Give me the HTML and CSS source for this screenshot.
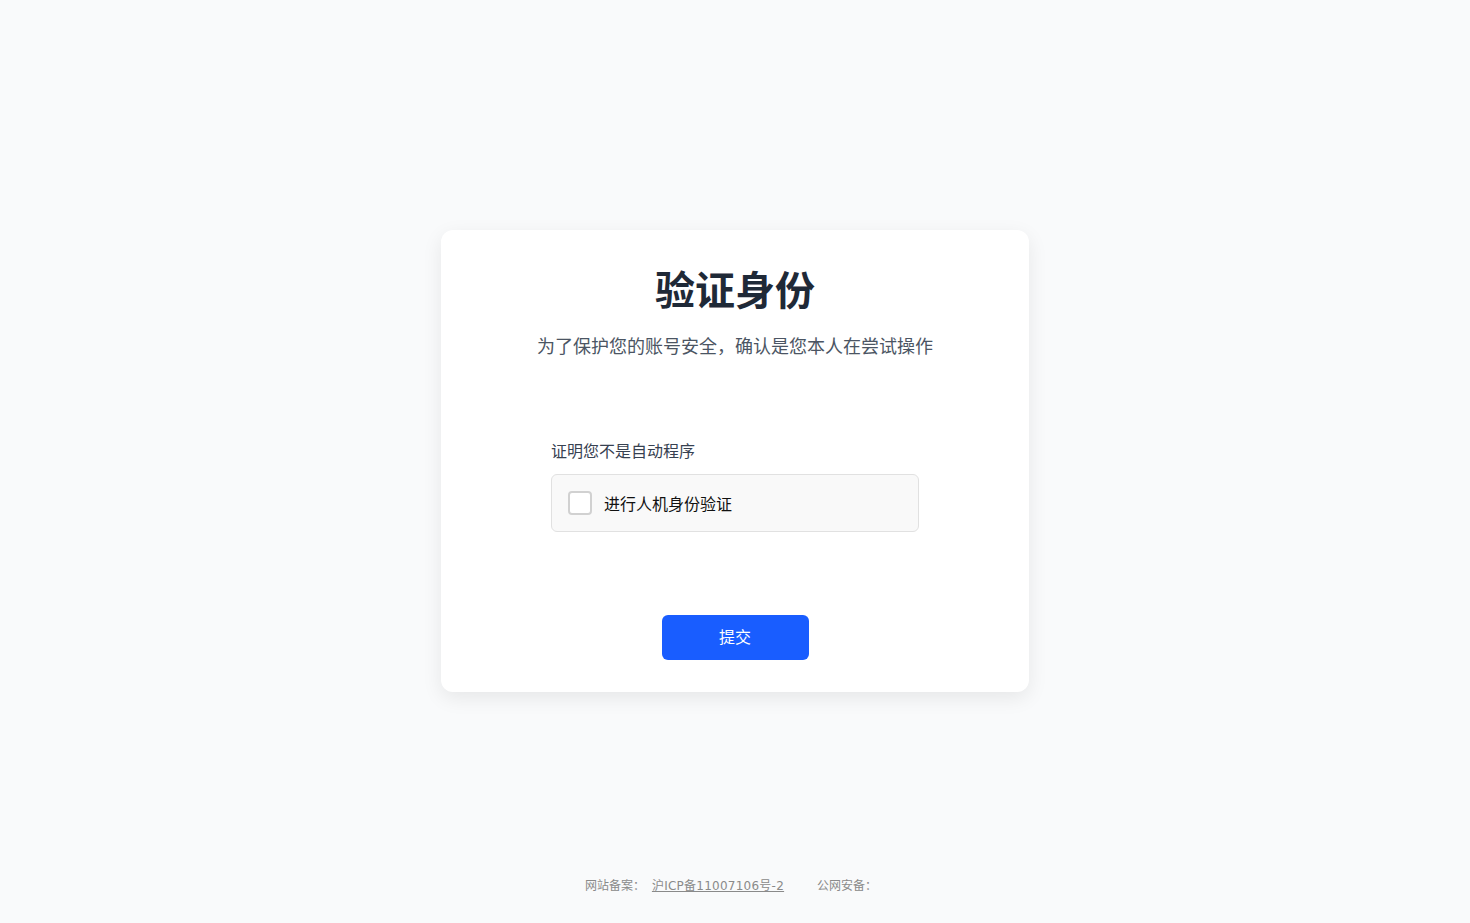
FILE: index.html
```html
<!DOCTYPE html>
<html lang="zh-CN">
<head>
<meta charset="utf-8">
<title>验证身份</title>
<link rel="stylesheet" href="styles.css">
</head>
<body>
<main class="page">
  <section class="card">
    <h1 class="title">验证身份</h1>
    <p class="subtitle">为了保护您的账号安全，确认是您本人在尝试操作</p>
    <div class="form">
      <div class="label">证明您不是自动程序</div>
      <label class="captcha">
        <span class="checkbox"></span>
        <span class="captcha-text">进行人机身份验证</span>
      </label>
    </div>
    <div class="actions">
      <button class="submit" type="button">提交</button>
    </div>
  </section>
</main>
<footer class="footer">
  <span class="beian">网站备案： <a class="beian-link" href="#">沪ICP备11007106号-2 </a></span>
  <span class="gongan">公网安备：</span>
</footer>
</body>
</html>
```

FILE: styles.css
```css
html, body {
  margin: 0;
  padding: 0;
}
body {
  background: #f9fafb;
  font-family: "DejaVu Sans", "Noto Sans CJK SC", sans-serif;
  color: #1f2937;
  min-height: 923px;
  display: flex;
  flex-direction: column;
}
.page {
  flex: 1;
  display: flex;
  justify-content: center;
  padding-top: 230px;
}
.card {
  box-sizing: border-box;
  width: 588px;
  height: 462px;
  background: #fff;
  border-radius: 12px;
  box-shadow: 0 6px 20px rgba(0, 0, 0, 0.08);
  padding: 36px 110px 32px;
  display: flex;
  flex-direction: column;
  align-items: stretch;
}
.title {
  margin: 0;
  text-align: center;
  font-size: 40px;
  line-height: 50px;
  font-weight: 700;
  color: #1f2937;
}
.subtitle {
  margin: 16px -30px 0;
  text-align: center;
  font-size: 18px;
  line-height: 30px;
  color: #4b5563;
}
.form {
  margin-top: 78px;
}
.label {
  font-size: 16px;
  line-height: 24px;
  color: #374151;
}
.captcha {
  margin-top: 10px;
  box-sizing: border-box;
  height: 58px;
  display: flex;
  align-items: center;
  gap: 12px;
  padding: 0 16px;
  background: #f9f9f9;
  border: 1px solid #e1e1e1;
  border-radius: 6px;
}
.checkbox {
  box-sizing: border-box;
  width: 24px;
  height: 24px;
  border: 2px solid #d1d1d1;
  border-radius: 4px;
  background: #fff;
}
.captcha-text {
  font-size: 16px;
  color: #111;
}
.actions {
  margin-top: auto;
  display: flex;
  justify-content: center;
}
.submit {
  width: 147px;
  height: 45px;
  border: none;
  border-radius: 6px;
  background: #195dff;
  color: #fff;
  font-family: "DejaVu Sans", "Noto Sans CJK SC", sans-serif;
  font-size: 16px;
  line-height: 45px;
  padding: 0 0 2px;
  cursor: pointer;
}
.footer {
  display: flex;
  justify-content: center;
  gap: 33px;
  font-size: 12px;
  line-height: 18px;
  color: #8a8a8a;
  padding-bottom: 28px;
}
.beian {
  display: flex;
  gap: 7px;
}
.beian-link {
  color: #8a8a8a;
  text-decoration: underline;
  letter-spacing: 0.25px;
}
.gongan {
  padding-right: 8px;
}
```
